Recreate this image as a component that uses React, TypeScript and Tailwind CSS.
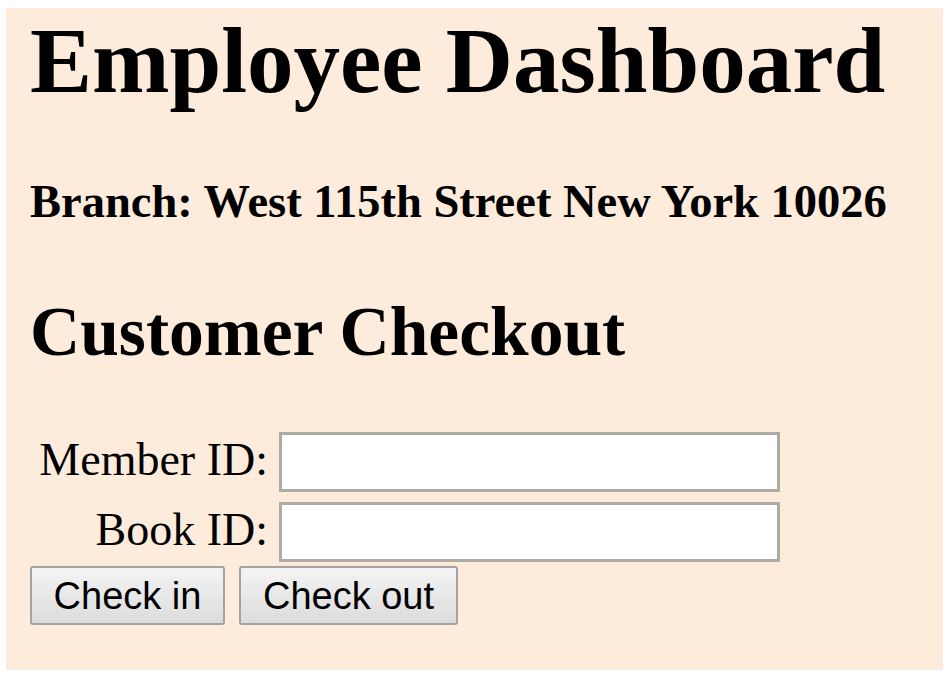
import { useState } from "react";

const serif = "font-['Liberation_Serif','Times_New_Roman',serif]";

function Field({ label, value, onChange }: { label: string; value: string; onChange: (v: string) => void }) {
  return (
    <div className="flex h-[60px] items-center">
      <label className={`w-[249px] pr-[11px] pb-[4px] text-right text-[46px] leading-[52px] text-black ${serif}`}>
        {label}
      </label>
      <input
        type="text"
        value={value}
        onChange={(e) => onChange(e.target.value)}
        className="h-[60px] w-[501px] border-[3px] border-[#aeaaa4] bg-white px-2 text-[38px] outline-none"
      />
    </div>
  );
}

export default function App() {
  const [memberId, setMemberId] = useState("");
  const [bookId, setBookId] = useState("");

  return (
    <div className="h-[678px] w-[950px] bg-white pl-[6px] pt-[8px]">
      <div className="h-[662px] w-[937px] bg-[#fdecdc] pl-[24px] pt-[1px]">
        <h1 className={`text-[93px] font-bold leading-[104px] text-black ${serif}`}>Employee Dashboard</h1>
        <h4 className={`mt-[62px] text-[46.5px] font-bold leading-[53px] text-black ${serif}`}>
          Branch: West 115th Street New York 10026
        </h4>
        <h2 className={`mt-[64px] text-[69.5px] font-bold leading-[79px] text-black ${serif}`}>Customer Checkout</h2>

        <div className="mt-[61px] flex flex-col gap-[10px]">
          <Field label="Member ID:" value={memberId} onChange={setMemberId} />
          <Field label="Book ID:" value={bookId} onChange={setBookId} />
        </div>

        <div className="mt-[4px] flex gap-[14px]">
          <button className="h-[59px] w-[195px] rounded-[3px] border-2 border-[#a3a3a3] bg-gradient-to-b from-[#f4f4f4] to-[#dcdcdc] font-['Liberation_Sans',Arial,sans-serif] text-[38px] text-black">
            Check in
          </button>
          <button className="h-[59px] w-[219px] rounded-[3px] border-2 border-[#a3a3a3] bg-gradient-to-b from-[#f4f4f4] to-[#dcdcdc] font-['Liberation_Sans',Arial,sans-serif] text-[38px] text-black">
            Check out
          </button>
        </div>
      </div>
    </div>
  );
}
